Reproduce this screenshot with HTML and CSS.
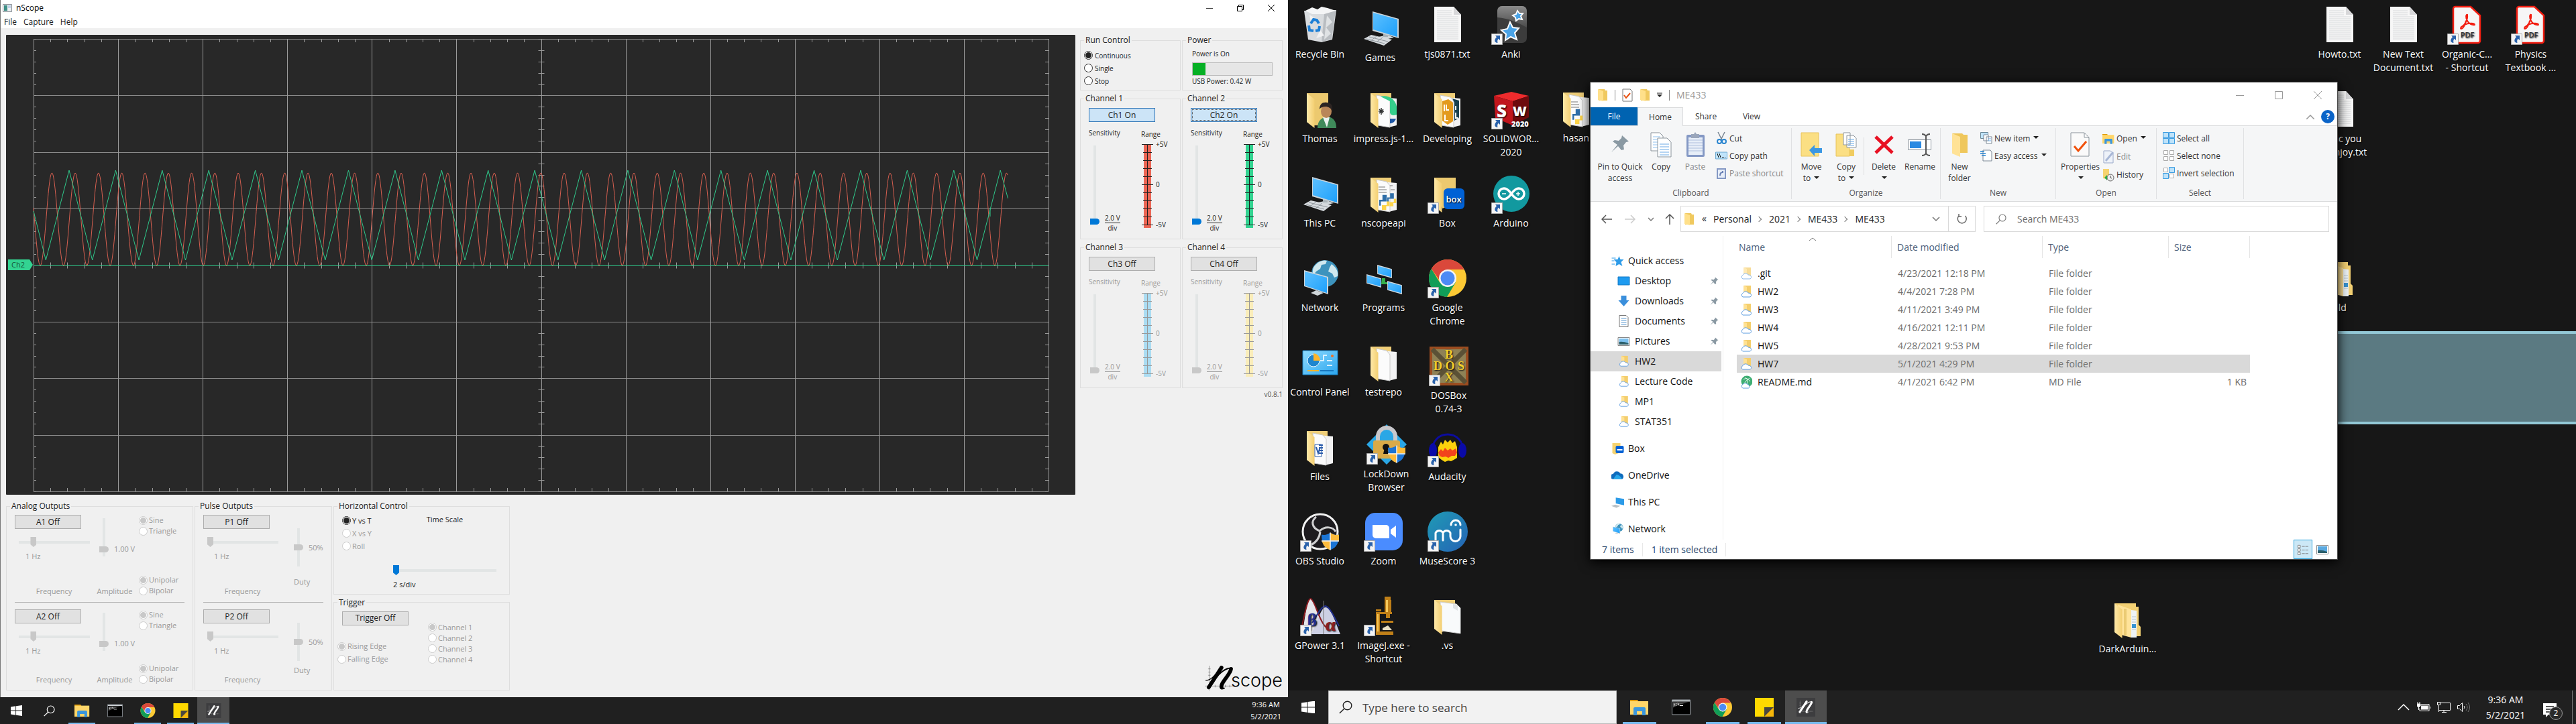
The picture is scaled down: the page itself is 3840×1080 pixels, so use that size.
FILE: index.html
```html
<!DOCTYPE html>
<html lang="en">
<head>
<meta charset="utf-8">
<title>nScope</title>
<link rel="stylesheet" href="styles.css">
</head>
<body>
<svg class="sprite" aria-hidden="true">
  <defs>
    <linearGradient id="g-sky" x1="0" y1="0" x2="1" y2="1"><stop offset="0" stop-color="#5cc0ff"/><stop offset="1" stop-color="#1ea0fb"/></linearGradient>
    <linearGradient id="g-fold" x1="0" y1="0" x2="1" y2="0"><stop offset="0" stop-color="#ffe9a8"/><stop offset="1" stop-color="#f3cf72"/></linearGradient>
    <linearGradient id="g-anki" x1="0" y1="0" x2="0" y2="1"><stop offset="0" stop-color="#8a8a8a"/><stop offset="1" stop-color="#4b4b4b"/></linearGradient>
    <linearGradient id="g-muse" x1="0" y1="0" x2="1" y2="1"><stop offset="0" stop-color="#1f9bb5"/><stop offset="1" stop-color="#2563b5"/></linearGradient>
    <linearGradient id="g-panel" x1="0" y1="0" x2="1" y2="1"><stop offset="0" stop-color="#8fdcff"/><stop offset="1" stop-color="#2ba5ee"/></linearGradient>
  </defs>
  <symbol id="s-arrow" viewBox="0 0 17 17"><path d="M.5.5h16v16H.5z" fill="#f4f4f4" stroke="#a8a8a8"/><path d="M6 3h7v7l-2.300-2.200C9 9.500 9 11.500 9.500 14 4.500 14 4 9 8 5.300z" fill="#2a62ab"/></symbol>
  <symbol id="s-file" viewBox="0 0 60 60"><path d="M10 3h29l11 12v41H10z" fill="#f7f7f7"/><path d="M39 3v12h11z" fill="#d7d7d9"/><path d="M14 9h22M14 12h22M14 15h22M14 18h32M14 21h32M14 24h32M14 27h32M14 30h32M14 33h32M14 36h32M14 39h32M14 42h32M14 45h32M14 48h32M14 51h32" stroke="#d6d8da"/></symbol>
  <symbol id="s-front" viewBox="0 0 60 60"><path d="M10 6l11.500 9v43L10 49z" fill="url(#g-fold)"/></symbol>
  <symbol id="s-pages" viewBox="0 0 60 60"><path d="M10 6h31v40l-20 8z" fill="#efce78"/><path d="M27 12l22 2v40l-12 3z" fill="#f2f2f3"/><path d="M19 9l15 3 5 6v39l-18-3z" fill="#fbfbfb" stroke="#c9c9c9"/><use href="#s-front"/></symbol>
  <symbol id="s-py" viewBox="0 0 20 30"><path d="M6 1h8v12H3v8H0V10h6z" fill="#2f6ea8"/><path d="M14 13h5v9h-6v7H5v-9h9z" fill="#fdd44a"/></symbol>
  <symbol id="s-pc" viewBox="0 0 60 60"><path d="M27 43l13-3 10 4-13 3z" fill="#cfd6da"/><path d="M34 36h7v7h-7z" fill="#aab3b8"/><path d="M18 5l39 11v29l-39-11z" fill="#c9d3da"/><path d="M19 7l36 10v26L19 32z" fill="url(#g-sky)"/><path d="M5 46l11-6 31 7-12 9z" fill="#d7dbdf"/><path d="M9 46l27 7M13 43l28 7M15 49l9-7M24 51l9-7" stroke="#8f979d" fill="none"/></symbol>
  <symbol id="s-mon" viewBox="0 0 24 22"><path d="M0 0l24 7v15L0 15z" fill="#d4dbe0"/><path d="M1 2l22 6v12L1 14z" fill="url(#g-sky)"/></symbol>
  <symbol id="s-net" viewBox="0 0 60 60"><circle cx="37" cy="23" r="20" fill="#3d93bd"/><path d="M20 14c6-9 14-12 20-10l-2 5-6 1-2 6-6 4-4 5c-2-4-1-8 0-11zM47 9c7 5 10 11 9 18l-5 2-3-6-6-3 2-6z" fill="#cfe8ee"/><path d="M16 52l8-4 11 4-9 4z" fill="#cfd6da"/><path d="M6 18l36 10v26L6 42z" fill="#cdd6dc"/><path d="M7 20l33 9v23L7 41z" fill="url(#g-sky)"/></symbol>
  <symbol id="s-chrome" viewBox="0 0 56 56"><circle cx="28" cy="28" r="28" fill="#fcc934"/><path d="M28 0A28 28 0 0 1 52.500 15H28L18 34 3.700 14A28 28 0 0 1 28 0z" fill="#da483b"/><path d="M3.700 14A28 28 0 0 0 27 56L40 34 28 41 16 34z" fill="#119d58"/><circle cx="28" cy="28" r="13" fill="#f4f4f4"/><circle cx="28" cy="28" r="10.500" fill="#4c8bf5"/></symbol>
  <symbol id="s-shield" viewBox="0 0 26 26"><path d="M13 0c4 3 8 4 13 3 0 12-3 19-13 23C3 22 0 15 0 3c5 1 9 0 13-3z" fill="#1b74d4"/><path d="M13 0c4 3 8 4 13 3v9H13zM13 12v14C5 23 2 18 .5 12z" fill="#fdbb3b"/><path d="M13 0v26M0 12.500h26" stroke="#f5f5f5" stroke-width="1.500"/></symbol>
  <symbol id="s-pdf" viewBox="0 0 60 60"><path d="M12 3h23l14 13v38a3 3 0 0 1-3 3H12a3 3 0 0 1-3-3V6a3 3 0 0 1 3-3z" fill="#f6f6f6" stroke="#f21d10" stroke-width="2.500"/><path d="M20 34c6-3 11-11 10-19-2-1-3 4 0 9 2 4 7 7 11 6 1-3-10-3-15 0-6 3-7 6-5 6 3 0 6-7 7-12" fill="none" stroke="#f21d10" stroke-width="2"/></symbol>
  <symbol id="s-dark" viewBox="0 0 60 60"><path d="M10 6h32v5h4v27l3 3v14H30z" fill="#f3d073"/><path d="M35 16l8 1v40h-9z" fill="#eef3f6"/><path d="M36 26h6M36 30h6M36 34h6M36 45h6" stroke="#b8c6d0"/><path d="M36 37h6v6h-6z" fill="#3a94d2"/><path d="M15 8l20 7v42l-15-4z" fill="#ffe39a"/><path d="M28 14v40l-4-1V14z" fill="#ebcb74"/><use href="#s-front"/></symbol>
  <symbol id="s-win" viewBox="0 0 20 18"><path d="M0 2.500L8.500 1.200v7.300H0zM9.500 1L20-.4v8.900H9.500zM0 9.500h8.500v7.300L0 15.500zM9.500 9.500H20v8.900L9.500 17z" fill="#fff"/></symbol>
  <symbol id="s-lens" viewBox="0 0 20 20"><circle cx="12.500" cy="7.500" r="6.300" fill="none" stroke="currentColor" stroke-width="1.400"/><path d="M8 12L.8 19" stroke="currentColor" stroke-width="1.500"/></symbol>
  <symbol id="s-explorer" viewBox="0 0 28 24"><path d="M0 1h11l2 3H0z" fill="#e09a06"/><path d="M0 3h27v20H0z" fill="#ffd669"/><path d="M5 14q0-2 2-2h14q2 0 2 2v10h-5v-6h-8v6H5z" fill="#3a96dd"/></symbol>
  <symbol id="s-cmd" viewBox="0 0 28 23"><path d="M.5.500h27v22H.5z" fill="#000" stroke="#9aa0a6"/><path d="M1 1h26v2H1z" fill="#cfd4d8"/><path d="M2 12q8-5 23-8H2z" fill="#555"/><path d="M4 6v3M6 6h1M6 9h1M9 5l2 4M12 9h5" stroke="#eee"/></symbol>
  <symbol id="s-sticky" viewBox="0 0 26 26"><path d="M0 0h26v13L13 26H0z" fill="#ffd900"/><path d="M13 26V13h13z" fill="#4a4740"/><path d="M26 13v13H13z" fill="#f5b60a"/></symbol>
  <symbol id="s-nmark" viewBox="0 0 46 40"><path d="M7 0v39M0 32h46M5 5h4M5 10h4M5 15h4M16 30v4M24 30v4M32 30v4M39 30v4" stroke="currentColor" opacity=".35" fill="none"/><path d="M1 23C10 24 18 12 26 3" stroke="currentColor" stroke-width="1.500" fill="none"/><path d="M26 3L6 34" stroke="currentColor" stroke-width="6" stroke-linecap="round"/><path d="M15 22C24 10 34 3 41 4" stroke="currentColor" stroke-width="2" fill="none"/><path d="M41 5C40 14 24 27 26 34" stroke="currentColor" stroke-width="6" fill="none" stroke-linecap="round"/><path d="M25 36q3 1 6-1" stroke="currentColor" stroke-width="2" fill="none"/></symbol>
  <symbol id="s-ntile" viewBox="0 0 30 30"><path d="M0 0h30v30H0z" fill="#3d3d3f"/><svg x="2" y="4" width="25" height="22"><use href="#s-nmark"/></svg></symbol>
  <symbol id="s-fold" viewBox="0 0 16 20"><path d="M2 1h9l1 2h3v15H2z" fill="#f0c95f"/><path d="M1 1l8 3v15L1 17z" fill="#ffe08a"/></symbol>
  <symbol id="s-cfold" viewBox="0 0 18 20"><path d="M5 1h11v16H5z" fill="#f4ce6d"/><path d="M5 1l5 2v14H5z" fill="#ffe193"/><path d="M4 18a3 3 0 0 1 0-5.500 4.500 4.500 0 0 1 8-.5c3 0 4.500 1.500 4.500 3.500 0 1.500-1 2.500-2.500 2.500z" fill="#fff" stroke="#5b9be0"/></symbol>
  <symbol id="s-pin" viewBox="0 0 28 28"><path d="M17 1l10 9-4 1-4 5 1 6-4 1-5-6-10 9 9-11-7-5 3-2 6 1 4-4z" fill="#8a99a3"/></symbol>
  <symbol id="s-gauge" viewBox="0 0 20 138"><path d="M4 7h11v125H4z" fill="currentColor"/><path d="M9.500 7v121M1 7.500h17M1 67.500h17M1 127.500h17M3 19.500h13M3 31.500h13M3 43.500h13M3 55.500h13M3 79.500h13M3 91.500h13M3 103.500h13M3 115.500h13" fill="none"/></symbol>
  <symbol id="s-pcsmall" viewBox="0 0 20 18"><path d="M7 2l13 2v10L7 11z" fill="#2c9be8"/><path d="M0 15l6-2 8 2-6 3z" fill="#b9c0c5"/></symbol>
</svg>

<div class="screens">
<section class="screen">
  <main class="scope-window">
    <header class="titlebar">
      <svg class="app-icon" viewBox="0 0 14 12"><path d="M.5.5h13v11H.5z" fill="#eef1f4" stroke="#8a9096"/><path d="M2 2h5v8H2z" fill="#3f8f86"/><path d="M8 2h4v4H8z" fill="#c3d3ea"/></svg>
      <span class="title">nScope</span>
      <button class="wbtn" aria-label="Minimize"><svg viewBox="0 0 12 12" width="10" height="10"><path d="M0 6.500h12" stroke="#000"/></svg></button>
      <button class="wbtn" aria-label="Restore"><svg viewBox="0 0 10 10" width="10" height="10"><path d="M.5 2.500h7v7h-7zM2.500 2.500v-2h7v7h-2" fill="none" stroke="#000"/></svg></button>
      <button class="wbtn" aria-label="Close"><svg viewBox="0 0 10 10" width="10" height="10"><path d="M0 0l10 10M10 0L0 10" stroke="#000"/></svg></button>
    </header>
    <nav class="menubar"><button>File</button><button>Capture</button><button>Help</button></nav>
    <div class="scope-body">
      <div class="scope-left">
        <svg id="plot" class="plot" viewBox="0 0 1594 686" role="img" aria-label="Oscilloscope traces"></svg>
        <div class="outputs">
          <fieldset class="group">
            <legend>Analog Outputs</legend>
            <div class="output muted">
              <div class="o-freq"><button class="btn">A1 Off</button><input type="range" class="hs" value="18" aria-label="A1 frequency" disabled><span class="hz">1 Hz</span><span class="cap">Frequency</span></div>
              <div class="o-amp"><div class="amp-row"><input type="range" class="vs" value="12" aria-label="A1 amplitude" disabled><span>1.00 V</span></div><span class="cap">Amplitude</span></div>
              <div class="o-mode"><div class="radios"><label><input type="radio" name="a1w" checked disabled>Sine</label><label><input type="radio" name="a1w" disabled>Triangle</label></div><div class="radios"><label><input type="radio" name="a1p" checked disabled>Unipolar</label><label><input type="radio" name="a1p" disabled>Bipolar</label></div></div>
            </div>
            <hr>
            <div class="output muted">
              <div class="o-freq"><button class="btn">A2 Off</button><input type="range" class="hs" value="18" aria-label="A2 frequency" disabled><span class="hz">1 Hz</span><span class="cap">Frequency</span></div>
              <div class="o-amp"><div class="amp-row"><input type="range" class="vs" value="12" aria-label="A2 amplitude" disabled><span>1.00 V</span></div><span class="cap">Amplitude</span></div>
              <div class="o-mode"><div class="radios"><label><input type="radio" name="a2w" checked disabled>Sine</label><label><input type="radio" name="a2w" disabled>Triangle</label></div><div class="radios"><label><input type="radio" name="a2p" checked disabled>Unipolar</label><label><input type="radio" name="a2p" disabled>Bipolar</label></div></div>
            </div>
          </fieldset>
          <fieldset class="group">
            <legend>Pulse Outputs</legend>
            <div class="output muted">
              <div class="o-freq"><button class="btn">P1 Off</button><input type="range" class="hs" value="0" aria-label="P1 frequency" disabled><span class="hz">1 Hz</span><span class="cap">Frequency</span></div>
              <div class="o-duty"><div class="duty-row"><input type="range" class="vs" value="50" aria-label="P1 duty" disabled><span>50%</span></div><span>Duty</span></div>
            </div>
            <hr>
            <div class="output muted">
              <div class="o-freq"><button class="btn">P2 Off</button><input type="range" class="hs" value="0" aria-label="P2 frequency" disabled><span class="hz">1 Hz</span><span class="cap">Frequency</span></div>
              <div class="o-duty"><div class="duty-row"><input type="range" class="vs" value="50" aria-label="P2 duty" disabled><span>50%</span></div><span>Duty</span></div>
            </div>
          </fieldset>
          <div class="stack">
            <fieldset class="group">
              <legend>Horizontal Control</legend>
              <div class="horiz">
                <div class="radios wide"><label><input type="radio" name="hz" checked>Y vs T</label><label class="muted"><input type="radio" name="hz" disabled>X vs Y</label><label class="muted"><input type="radio" name="hz" disabled>Roll</label></div>
                <div class="time"><label for="timescale">Time Scale</label><input id="timescale" type="range" class="hs" value="0"><span>2 s/div</span></div>
              </div>
            </fieldset>
            <fieldset class="group">
              <legend>Trigger</legend>
              <div class="trigger">
                <div class="trig-left"><button class="btn">Trigger Off</button><div class="radios wide muted"><label><input type="radio" name="edge" checked disabled>Rising Edge</label><label><input type="radio" name="edge" disabled>Falling Edge</label></div></div>
                <div class="radios trig-ch muted"><label><input type="radio" name="tch" checked disabled>Channel 1</label><label><input type="radio" name="tch" disabled>Channel 2</label><label><input type="radio" name="tch" disabled>Channel 3</label><label><input type="radio" name="tch" disabled>Channel 4</label></div>
              </div>
            </fieldset>
          </div>
        </div>
      </div>
      <aside class="scope-side">
        <div class="side-grid">
          <fieldset class="group run">
            <legend>Run Control</legend>
            <div class="radios wide"><label><input type="radio" name="run" checked>Continuous</label><label><input type="radio" name="run">Single</label><label><input type="radio" name="run">Stop</label></div>
          </fieldset>
          <fieldset class="group power">
            <legend>Power</legend>
            <div class="power-body"><span>Power is On</span><progress value="16" max="100" aria-label="USB power"></progress><span>USB Power: 0.42 W</span></div>
          </fieldset>
          <fieldset class="group channel ch1">
            <legend>Channel 1</legend>
            <button class="btn on">Ch1 On</button>
            <div class="ch-body">
              <div class="sens"><label for="s1">Sensitivity</label><div class="sens-row"><input id="s1" type="range" class="vs" value="0"><span class="frac"><span>2.0 V</span><span>div</span></span></div></div>
              <div class="range"><span>Range</span><div class="gauge"><svg viewBox="0 0 20 138"><use href="#s-gauge" width="20" height="138"/></svg><div class="ticks"><span>+5V</span><span>0</span><span>-5V</span></div></div></div>
            </div>
          </fieldset>
          <fieldset class="group channel ch2">
            <legend>Channel 2</legend>
            <button class="btn on focused">Ch2 On</button>
            <div class="ch-body">
              <div class="sens"><label for="s2">Sensitivity</label><div class="sens-row"><input id="s2" type="range" class="vs" value="0"><span class="frac"><span>2.0 V</span><span>div</span></span></div></div>
              <div class="range"><span>Range</span><div class="gauge"><svg viewBox="0 0 20 138"><use href="#s-gauge" width="20" height="138"/></svg><div class="ticks"><span>+5V</span><span>0</span><span>-5V</span></div></div></div>
            </div>
          </fieldset>
          <fieldset class="group channel ch3">
            <legend>Channel 3</legend>
            <button class="btn">Ch3 Off</button>
            <div class="ch-body muted">
              <div class="sens"><label for="s3">Sensitivity</label><div class="sens-row"><input id="s3" type="range" class="vs" value="0" disabled><span class="frac"><span>2.0 V</span><span>div</span></span></div></div>
              <div class="range"><span>Range</span><div class="gauge"><svg viewBox="0 0 20 138"><use href="#s-gauge" width="20" height="138"/></svg><div class="ticks"><span>+5V</span><span>0</span><span>-5V</span></div></div></div>
            </div>
          </fieldset>
          <fieldset class="group channel ch4">
            <legend>Channel 4</legend>
            <button class="btn">Ch4 Off</button>
            <div class="ch-body muted">
              <div class="sens"><label for="s4">Sensitivity</label><div class="sens-row"><input id="s4" type="range" class="vs" value="0" disabled><span class="frac"><span>2.0 V</span><span>div</span></span></div></div>
              <div class="range"><span>Range</span><div class="gauge"><svg viewBox="0 0 20 138"><use href="#s-gauge" width="20" height="138"/></svg><div class="ticks"><span>+5V</span><span>0</span><span>-5V</span></div></div></div>
            </div>
          </fieldset>
        </div>
        <span class="version">v0.8.1</span>
        <div class="logo"><svg viewBox="0 0 46 40"><use href="#s-nmark"/></svg><span>scope</span></div>
      </aside>
    </div>
  </main>
  <footer class="taskbar small">
    <button class="task" aria-label="Start"><svg class="i-win"><use href="#s-win"/></svg></button>
    <button class="task" aria-label="Search"><svg class="i-lens"><use href="#s-lens"/></svg></button>
    <button class="task open" aria-label="File Explorer"><svg class="i-app"><use href="#s-explorer"/></svg></button>
    <button class="task" aria-label="Command Prompt"><svg class="i-app"><use href="#s-cmd"/></svg></button>
    <button class="task open" aria-label="Chrome"><svg class="i-app"><use href="#s-chrome"/></svg></button>
    <button class="task open" aria-label="Sticky Notes"><svg class="i-app"><use href="#s-sticky"/></svg></button>
    <button class="task active" aria-label="nScope"><svg class="i-app"><use href="#s-ntile"/></svg></button>
    <div class="clock"><span>9:36 AM</span><span>5/2/2021</span></div>
  </footer>
</section>

<section class="screen">
  <div class="desktop">
    <div class="band"></div>
    <a href="#" class="icon c1 r1"><svg viewBox="0 0 60 60"><path d="M6 9l48-1-6 44-16 4-20-4z" fill="#d9dcdf"/><path d="M8 9l10-5 8 3 6-4 9 2 12 4-9 5H18z" fill="#f4f5f6"/><path d="M36 14l17-5-6 42-15 5z" fill="#b9bdc1"/><path d="M40 16l8 10-9 8 7 9-10 9" fill="#dfe2e4"/><path d="M14 15l8 5-6 6zM30 38l6 8-12 4z" fill="#f1f2f3"/><path d="M16 28l4-6 5 1 3 5M13 31l1 7 6 1M23 39l5-1 1-6" fill="none" stroke="#1c7fd6" stroke-width="4"/></svg><span>Recycle Bin</span></a>
    <a href="#" class="icon games"><svg><use href="#s-pc"/></svg><span>Games</span></a>
    <a href="#" class="icon c3 r1"><svg><use href="#s-file"/></svg><span>tjs0871.txt</span></a>
    <a href="#" class="icon c4 r1"><svg viewBox="0 0 60 60"><rect x="9" y="2" width="44" height="55" rx="7" fill="#3c3c3c"/><path d="M16 2h30a7 7 0 0 1 7 7v25C42 28 26 20 9 19V9a7 7 0 0 1 7-7z" fill="url(#g-anki)"/><path d="M28 26l4 8 9 1-6 7 3 10-9-4-8 5 1-9-7-6 9-2zM39 9l3 4 5 0-3 4 2 5-5-1-4 3-1-5-4-3 5-2z" fill="#4aa3e6" stroke="#fff" stroke-width="2"/><use href="#s-arrow" y="43" width="17" height="17"/></svg><span>Anki</span></a>

    <a href="#" class="icon c1 r2"><svg viewBox="0 0 60 60"><path d="M10 6h32v48H21z" fill="#ecc96f"/><use href="#s-front"/><path d="M26 58c0-10 5-16 15-17 9 1 13 7 13 17z" fill="#3f8a5a"/><path d="M34 42h10l-4 15z" fill="#e9f1ee"/><ellipse cx="39" cy="33" rx="8" ry="10" fill="#b98658"/><path d="M29 30c0-8 5-11 11-10 7 0 9 5 8 13-2-5-6-7-10-7-4 0-7 1-9 4z" fill="#2b2422"/></svg><span>Thomas</span></a>
    <a href="#" class="icon c2 r2"><svg viewBox="0 0 60 60"><use href="#s-pages"/><path d="M25 11c12-3 22 4 24 15v12c-5 2-9 1-10-3V18z" fill="#35cf8c"/><path d="M39 44h9c-2 5-5 7-9 7z" fill="#1e57a5"/><path d="M26 28v10M23 30l6 6M29 30l-6 6M22 33h8" stroke="#333" stroke-width="1.500"/></svg><span>impress.js-1...</span></a>
    <a href="#" class="icon c3 r2"><svg viewBox="0 0 60 60"><use href="#s-pages"/><path d="M22 18l9-3 7 5v28l-8 5-8-6z" fill="#e39a1d"/><path d="M37 14l10 3v26l-7 4V20z" fill="#17404f"/><path d="M25 23v10M28 23v8h4M26 38v9h5M42 25v6M42 35v8h4" stroke="#fff" stroke-width="2" fill="none"/></svg><span>Developing</span></a>
    <a href="#" class="icon c4 r2"><svg viewBox="0 0 60 60"><path d="M4 10l26-6 26 6-24 8z" fill="#ef2b2d"/><path d="M4 10l28 8v36L6 43z" fill="#c1161c"/><path d="M56 10l-24 8v36l24-12z" fill="#6d0a0d"/><text x="8" y="42" class="sw-text">S</text><text x="32" y="40" class="sw-text sw-w">W</text><text x="30" y="56" class="sw-year">2020</text><use href="#s-arrow" y="43" width="17" height="17"/></svg><span>SOLIDWOR... 2020</span></a>
    <a href="#" class="icon hasan"><svg viewBox="0 0 60 60"><use href="#s-pages"/><path d="M22 20h10M22 24h12M22 28h12" stroke="#777"/><use href="#s-py" x="24" y="29" width="16" height="26"/></svg><span>hasan</span></a>

    <a href="#" class="icon c1 r3"><svg><use href="#s-pc"/></svg><span>This PC</span></a>
    <a href="#" class="icon c2 r3"><svg viewBox="0 0 60 60"><use href="#s-pages"/><path d="M22 20h10M22 24h12M22 28h12M39 18h4M40 24h6" stroke="#777"/><use href="#s-py" x="35" y="26" width="14" height="26"/><use href="#s-py" x="23" y="30" width="16" height="26"/></svg><span>nscopeapi</span></a>
    <a href="#" class="icon c3 r3"><svg viewBox="0 0 60 60"><path d="M10 6h32v38l-20 8z" fill="#ecc96f"/><use href="#s-front"/><rect x="24" y="22" width="31" height="31" rx="6" fill="#0061d5"/><text x="39" y="43" class="box-text">box</text><use href="#s-arrow" y="43" width="17" height="17"/></svg><span>Box</span></a>
    <a href="#" class="icon c4 r3"><svg viewBox="0 0 60 60"><circle cx="30" cy="30" r="27" fill="#12999f"/><path d="M30 30c-5-7-8-8-11-8a8 8 0 0 0 0 16c3 0 6-1 11-8 5-7 8-8 11-8a8 8 0 0 1 0 16c-3 0-6-1-11-8z" fill="none" stroke="#fff" stroke-width="3.500"/><path d="M16 30h6M37 30h6M40 27v6" stroke="#fff" stroke-width="1.500"/><use href="#s-arrow" y="43" width="17" height="17"/></svg><span>Arduino</span></a>

    <a href="#" class="icon c1 r4"><svg><use href="#s-net"/></svg><span>Network</span></a>
    <a href="#" class="icon c2 r4"><svg viewBox="0 0 60 60"><path d="M27 30h5v6h8v3H26z" fill="#35b04a"/><use href="#s-mon" x="20" y="10" width="22" height="20"/><use href="#s-mon" x="4" y="24" width="22" height="20"/><use href="#s-mon" x="35" y="34" width="22" height="20"/></svg><span>Programs</span></a>
    <a href="#" class="icon c3 r4"><svg viewBox="0 0 60 60"><use href="#s-chrome" x="2" y="2" width="56" height="56"/><use href="#s-arrow" y="43" width="17" height="17"/></svg><span>Google Chrome</span></a>

    <a href="#" class="icon c1 r5"><svg viewBox="0 0 60 60"><path d="M4 12h52v36H4z" fill="url(#g-panel)" stroke="#187fc0"/><circle cx="20" cy="27" r="9" fill="#1f86cf" stroke="#e8f6ff"/><path d="M20 16a11 11 0 0 1 10 11H20z" fill="#fdb62c"/><path d="M30 27h5v-8h5M40 27h8M40 34h8" stroke="#d9f1ff" stroke-width="2" fill="none"/><circle cx="48" cy="20" r="2" fill="#f36f21"/><path d="M11 42h17" stroke="#fdb62c" stroke-width="2"/><path d="M30 42h20" stroke="#1878c0" stroke-width="2"/></svg><span>Control Panel</span></a>
    <a href="#" class="icon c2 r5"><svg><use href="#s-pages"/></svg><span>testrepo</span></a>
    <a href="#" class="icon dosbox"><svg viewBox="0 0 60 60"><path d="M1 1h58v58H1z" fill="#9c4d20"/><path d="M5 5h50v50H5z" fill="#8f8256"/><path d="M5 5l50 50M55 5L5 55" stroke="#5b5136" stroke-width="7"/><text x="30" y="19" class="dos-text">B</text><text x="30" y="36" class="dos-text">D O S</text><text x="30" y="53" class="dos-text">X</text><use href="#s-arrow" y="43" width="17" height="17"/></svg><span>DOSBox<br>0.74-3</span></a>

    <a href="#" class="icon c1 r6"><svg viewBox="0 0 60 60"><use href="#s-pages"/><path d="M22 26h10v18H22z" fill="#fff" stroke="#2b5cab"/><path d="M24 30l3 9 3-9M28 27h6M28 31h6M28 35h6M28 39h6" stroke="#2b5cab" stroke-width="2" fill="none"/></svg><span>Files</span></a>
    <a href="#" class="icon lockdown"><svg viewBox="0 0 60 60"><path d="M30 0l30 30-30 30L0 30z" fill="#2aa7e6"/><path d="M17 25V18a13 13 0 0 1 26 0v7" fill="none" stroke="#c8c8cc" stroke-width="6"/><rect x="10" y="24" width="40" height="27" rx="3" fill="#d9aa48"/><circle cx="29" cy="34" r="5" fill="#111"/><path d="M27 35h4l2 9h-8z" fill="#111"/><use href="#s-shield" x="32" y="31" width="26" height="27"/><use href="#s-arrow" y="43" width="17" height="17"/></svg><span>LockDown Browser</span></a>
    <a href="#" class="icon c3 r6"><svg viewBox="0 0 60 60"><path d="M7 38C5 2 55 2 53 38" fill="none" stroke="#0c0c9e" stroke-width="3"/><path d="M16 30l4-8 3 4 3-7 4 4 4-4 3 5 4-3 3 9v16l-5 3-4 2-4-1-5 2-5-3-5-4z" fill="#fcd20c"/><path d="M16 38l4-5 3 3 3-5 4 4 4-3 3 3 5-3 2 6-3 5-5 0-5 3-4-2-5 1-4-2z" fill="#f2431c"/><ellipse cx="8" cy="35" rx="6" ry="11" fill="#0a0aa8"/><ellipse cx="52" cy="35" rx="6" ry="11" fill="#0a0aa8"/><use href="#s-arrow" y="43" width="17" height="17"/></svg><span>Audacity</span></a>

    <a href="#" class="icon c1 r7"><svg viewBox="0 0 60 60"><circle cx="30" cy="30" r="26" fill="#1d1b1f" stroke="#f2f2f2" stroke-width="3"/><path d="M24 8c-8 6-7 16 5 21 9-8 20-6 24 1M30 30c-1 10-6 16-14 20" fill="none" stroke="#cfcfd1" stroke-width="3"/><use href="#s-shield" x="32" y="31" width="26" height="27"/><use href="#s-arrow" y="43" width="17" height="17"/></svg><span>OBS Studio</span></a>
    <a href="#" class="icon c2 r7"><svg viewBox="0 0 60 60"><rect x="2" y="2" width="56" height="56" rx="15" fill="#4a8cff"/><path d="M13 20h20a5 5 0 0 1 5 5v15H18a5 5 0 0 1-5-5zM40 27l8-6v18l-8-6z" fill="#fff"/><use href="#s-arrow" y="43" width="17" height="17"/></svg><span>Zoom</span></a>
    <a href="#" class="icon c3 r7"><svg viewBox="0 0 60 60"><circle cx="30" cy="30" r="30" fill="url(#g-muse)"/><path d="M12 44V32a6 6 0 0 1 11 0v11M23 43V32a6 6 0 0 1 11 0v5a7 7 0 0 0 15 0V27M35 20a7 7 0 0 1 14 0" fill="none" stroke="#fff" stroke-width="3" stroke-linecap="round"/><circle cx="42" cy="20" r="1.800" fill="#fff"/><use href="#s-arrow" y="43" width="17" height="17"/></svg><span>MuseScore 3</span></a>

    <a href="#" class="icon c1 r8"><svg viewBox="0 0 60 60"><path d="M4 57C8 20 12 3 16 4c7 4 14 40 25 53z" fill="#e6e6ea"/><path d="M16 57c8-10 14-40 22-40s14 20 22 40z" fill="#cdd0e4"/><path d="M3 45C8 20 12 3 16 4c7 4 12 34 23 43" fill="none" stroke="#8a1d22" stroke-width="2"/><path d="M18 40c6-8 12-24 20-25 6 2 11 12 20 30" fill="none" stroke="#22308f" stroke-width="2"/><path d="M35 7v50" stroke="#777"/><text x="18" y="45" class="gp-text gp-b">β</text><text x="45" y="52" class="gp-text gp-a">α</text><use href="#s-arrow" y="43" width="17" height="17"/></svg><span>GPower 3.1</span></a>
    <a href="#" class="icon c2 r8"><svg viewBox="0 0 60 60"><path d="M31 1h9v5h1v19h-2v8h-6v-8h-2zM18 24h24v3H24v26h20v5H18zM26 37h18v3H26zM18 20h8v3h-8z" fill="#c08018"/><path d="M33 6h3v18h-3zM20 27h2v26h-2z" fill="#f6c85a"/><path d="M28 48l8-4 6 7H28z" fill="#e9dfc4"/><use href="#s-arrow" y="43" width="17" height="17"/></svg><span>ImageJ.exe - Shortcut</span></a>
    <a href="#" class="icon c3 r8"><svg viewBox="0 0 60 60"><path d="M10 6h31v40l-20 8z" fill="#efce78"/><path d="M19 9l24 3 6 6v38l-28-4z" fill="#f8fafb" stroke="#cfcfcf"/><path d="M38 12v6l7 4V13z" fill="#dfe2e4"/><use href="#s-front"/></svg><span>.vs</span></a>

    <a href="#" class="icon d1 r1"><svg><use href="#s-file"/></svg><span>Howto.txt</span></a>
    <a href="#" class="icon d2 r1"><svg><use href="#s-file"/></svg><span>New Text Document.txt</span></a>
    <a href="#" class="icon d3 r1"><svg viewBox="0 0 60 60"><use href="#s-pdf"/><text x="30" y="49" class="pdf-text">PDF</text><use href="#s-arrow" y="43" width="17" height="17"/></svg><span>Organic-C...<br>- Shortcut</span></a>
    <a href="#" class="icon d4 r1"><svg viewBox="0 0 60 60"><use href="#s-pdf"/><text x="30" y="49" class="pdf-text">PDF</text><use href="#s-arrow" y="43" width="17" height="17"/></svg><span>Physics Textbook&nbsp;...</span></a>
    <a href="#" class="icon d1 r2"><svg><use href="#s-file"/></svg><span>Music you will&nbsp;enjoy.txt</span></a>
    <a href="#" class="icon d1 r4"><svg><use href="#s-dark"/></svg><span>old</span></a>
    <a href="#" class="icon arduino-dark"><svg><use href="#s-dark"/></svg><span>DarkArduin...</span></a>

    <article class="explorer">
      <header class="ex-title">
        <svg class="i-fold"><use href="#s-fold"/></svg><i></i>
        <svg class="i-check" viewBox="0 0 16 20"><path d="M1 1h11l3 3v15H1z" fill="#fff" stroke="#777"/><path d="M3 10l3 4 6-7" fill="none" stroke="#e8500f" stroke-width="2"/></svg>
        <svg class="i-fold"><use href="#s-fold"/></svg>
        <svg class="i-drop" viewBox="0 0 8 8"><path d="M0 1h8" stroke="#222"/><path d="M0 3h8L4 7z" fill="#222"/></svg><i></i>
        <span class="ex-name">ME433</span>
        <button class="wbtn" aria-label="Minimize"><svg viewBox="0 0 12 12" width="12" height="12"><path d="M0 6.500h12" stroke="#999"/></svg></button>
        <button class="wbtn" aria-label="Maximize"><svg viewBox="0 0 12 12" width="12" height="12"><path d="M.5.500h11v11H.5z" fill="none" stroke="#999"/></svg></button>
        <button class="wbtn" aria-label="Close"><svg viewBox="0 0 12 12" width="12" height="12"><path d="M0 0l12 12M12 0L0 12" stroke="#999"/></svg></button>
      </header>
      <div class="tabs">
        <button class="tab file">File</button><button class="tab current">Home</button><button class="tab">Share</button><button class="tab">View</button>
        <svg class="i-up" viewBox="0 0 12 7"><path d="M0 7l6-6 6 6" fill="none" stroke="#999" stroke-width="1.500"/></svg>
        <button class="help" aria-label="Help">?</button>
      </div>
      <div class="ribbon">
        <section class="rg g-clip">
          <div class="rg-items">
            <button class="big w-pin"><svg><use href="#s-pin" x="2" y="3" width="28" height="30"/></svg><span>Pin to Quick access</span></button>
            <button class="big w-copy"><svg viewBox="0 0 32 38"><path d="M1 1h13l5 5v22H1z" fill="#fff" stroke="#8a939b"/><path d="M4 7h11M4 11h12M4 15h12M4 19h12M4 23h12" stroke="#8ec0ee"/><path d="M11 9h14l6 6v22H11z" fill="#fff" stroke="#8a939b"/><path d="M14 18h14M14 22h14M14 26h14M14 30h14M14 34h14" stroke="#6aa9e6"/></svg><span>Copy</span></button>
            <button class="big w-paste muted"><svg viewBox="0 0 32 38"><rect x="3" y="4" width="27" height="33" rx="2" fill="#8498c4"/><path d="M6 8h21v26H6z" fill="#e7eef8"/><path d="M6 12h21M6 16h21M6 20h21M6 24h21M6 28h21" stroke="#aebfdd"/><path d="M10 3h4l2-3 2 3h4v6H10z" fill="#9aa6bb"/></svg><span>Paste</span></button>
            <div class="rows">
              <button><svg viewBox="0 0 18 20"><path d="M4 1l6 12M14 1L8 13" stroke="#7a8794" stroke-width="1.500"/><circle cx="6" cy="15" r="3" fill="none" stroke="#2784cf" stroke-width="2"/><circle cx="13" cy="15" r="3" fill="none" stroke="#2784cf" stroke-width="2"/></svg>Cut</button>
              <button><svg viewBox="0 0 18 20"><path d="M.5 5h17v10H.5z" fill="#bfe3fa" stroke="#6aa7cf"/><path d="M3 7l2 6M6 7l2 6M10 12.500h1M12 12.500h1M14 12.500h1" stroke="#111"/></svg>Copy path</button>
              <button class="muted"><svg viewBox="0 0 18 20"><rect x="2" y="3" width="14" height="16" fill="#8498c4"/><path d="M4 5h10v12H4z" fill="#e7eef8"/><path d="M7 14c0-4 2-5 4-5V7" fill="none" stroke="#6b82b5" stroke-width="2"/></svg>Paste shortcut</button>
            </div>
          </div>
          <h6>Clipboard</h6>
        </section>
        <section class="rg g-org">
          <div class="rg-items">
            <button class="big w-to"><svg viewBox="0 0 32 38"><path d="M1 1h26v35H1z" fill="#fbdf83" stroke="#e8c35c"/><path d="M13 27l8-8v5h11v7H21v5z" fill="#3b97e3"/></svg><span>Move<br>to <b class="dd"></b></span></button>
            <button class="big w-to"><svg viewBox="0 0 32 38"><path d="M1 3h20v33H1z" fill="#fbdf83" stroke="#e8c35c"/><path d="M21 26h7v10h-7z" fill="#f0cc60"/><path d="M12 1h10v18H12zM17 5h10l4 4v14H17z" fill="#fff" stroke="#8a939b"/><path d="M19 11h9M19 14h9M19 17h9M19 20h9" stroke="#6aa9e6"/></svg><span>Copy<br>to <b class="dd"></b></span></button>
            <i></i>
            <button class="big w-del"><svg viewBox="0 0 32 38"><path d="M4 7l25 24M29 7L4 31" stroke="#e81123" stroke-width="5"/></svg><span>Delete<br><b class="dd"></b></span></button>
            <button class="big w-ren"><svg class="wide-svg" viewBox="0 0 38 38"><path d="M1.500 11.500h34v15h-34z" fill="#fff" stroke="#8a939b"/><path d="M4 14h17v10H4z" fill="#2b8ae2"/><path d="M22 3q4 0 6 3 2-3 6-3M28 6v27M22 35q4 0 6-3 2 3 6 3" fill="none" stroke="#555" stroke-width="2"/></svg><span>Rename</span></button>
          </div>
          <h6>Organize</h6>
        </section>
        <section class="rg g-new">
          <div class="rg-items">
            <button class="big w-new"><svg viewBox="0 0 32 38"><path d="M5 2h15l2 2h6v27h-14z" fill="#efc75c"/><path d="M5 2l12 5v30L5 32z" fill="#ffe296"/></svg><span>New<br>folder</span></button>
            <div class="rows"><button><svg viewBox="0 0 18 20"><path d="M.5 1.500h11v9H.5z" fill="#bfe3fa" stroke="#6a8797"/><path d="M5 5h7v9H5zM9 8h8v10H9z" fill="#fff" stroke="#7a8794"/><path d="M11 11h5M11 14h5" stroke="#6aa9e6"/></svg>New item <b class="dd"></b></button><button><svg viewBox="0 0 18 20"><path d="M4 2h11l2 3v13H4z" fill="#fff" stroke="#7a8794"/><path d="M0 7h8M2 10h6M0 4h6" stroke="#2784cf" stroke-width="1.500"/></svg>Easy access <b class="dd"></b></button></div>
          </div>
          <h6>New</h6>
        </section>
        <section class="rg g-open">
          <div class="rg-items">
            <button class="big w-prop"><svg viewBox="0 0 32 38"><path d="M2 1h20l7 7v28H2z" fill="#fafafa" stroke="#8a939b"/><path d="M22 1v7h7" fill="none" stroke="#8a939b"/><path d="M7 21l6 7 12-14" fill="none" stroke="#f0510c" stroke-width="3"/></svg><span>Properties<br><b class="dd"></b></span></button>
            <div class="rows loose"><button><svg><use href="#s-explorer" width="18" height="20"/></svg>Open <b class="dd"></b></button><button class="muted"><svg viewBox="0 0 18 20"><path d="M2 1h10l4 4v14H2z" fill="#eef2f9" stroke="#9aa9c9"/><path d="M5 16L16 3" stroke="#a9b8d6" stroke-width="3"/></svg>Edit</button><button><svg viewBox="0 0 18 20"><path d="M1 1h9v16L1 15z" fill="#f6d36f"/><circle cx="12" cy="14" r="5" fill="#eee" stroke="#666"/><path d="M12 11v3l2 1" stroke="#444" fill="none"/><path d="M3 14l4-4v8z" fill="#2da84a"/></svg>History</button></div>
          </div>
          <h6>Open</h6>
        </section>
        <section class="rg g-sel">
          <div class="rg-items">
            <div class="rows"><button><svg viewBox="0 0 18 20"><path d="M.5 1.500h8v8h-8zM9.500 1.500h8v8h-8zM.5 10.500h8v8h-8zM9.500 10.500h8v8h-8z" fill="#bfe3fa" stroke="#3a9be0"/></svg>Select all</button><button><svg viewBox="0 0 18 20"><path d="M1.500 2.500h6v6h-6zM10.500 2.500h6v6h-6zM1.500 11.500h6v6h-6zM10.500 11.500h6v6h-6z" fill="#fff" stroke="#aaa"/></svg>Select none</button><button><svg viewBox="0 0 18 20"><path d="M1.500 2.500h6v6h-6zM10.500 11.500h6v6h-6z" fill="#fff" stroke="#aaa"/><path d="M9.500 1.500h8v8h-8zM.5 10.500h8v8h-8z" fill="#bfe3fa" stroke="#3a9be0"/></svg>Invert selection</button></div>
          </div>
          <h6>Select</h6>
        </section>
      </div>
      <div class="address">
        <div class="arrows">
          <svg viewBox="0 0 16 16"><path d="M16 8H1M7 2L1 8l6 6" fill="none" stroke="#555" stroke-width="1.500"/></svg>
          <svg viewBox="0 0 16 16"><path d="M0 8h15M9 2l6 6-6 6" fill="none" stroke="#ccc" stroke-width="1.500"/></svg>
          <svg class="tiny" viewBox="0 0 8 8"><path d="M0 2l4 4 4-4" fill="none" stroke="#777" stroke-width="1.500"/></svg>
          <svg viewBox="0 0 16 16"><path d="M8 16V1M2 7l6-6 6 6" fill="none" stroke="#555" stroke-width="1.500"/></svg>
        </div>
        <div class="path"><svg class="i-fold"><use href="#s-fold"/></svg><span class="laq">«</span><a href="#">Personal</a><em></em><a href="#">2021</a><em></em><a href="#">ME433</a><em></em><a href="#">ME433</a><svg class="i-down" viewBox="0 0 12 8"><path d="M1 1l5 5 5-5" fill="none" stroke="#777" stroke-width="1.500"/></svg></div>
        <button class="refresh" aria-label="Refresh"><svg viewBox="0 0 16 16"><path d="M3 3a6.500 6.500 0 1 0 9.500 0M3 0v4h4" fill="none" stroke="#666" stroke-width="1.500"/></svg></button>
        <label class="find"><svg><use href="#s-lens"/></svg><input type="text" placeholder="Search ME433" aria-label="Search ME433"></label>
      </div>
      <div class="ex-body">
        <ul class="tree">
          <li><svg viewBox="0 0 18 18"><path d="M11 2l2 5 5 0-4 4 2 6-5-3-5 3 1-6-4-4 6 0z" fill="#2d9be8"/><path d="M0 5h6M0 9h4M0 14h5" stroke="#2d9be8"/></svg>Quick access</li>
          <li class="sub"><svg viewBox="0 0 18 18"><path d="M.5 3h17v12H.5z" fill="#1e9bf0" stroke="#1279c4"/></svg>Desktop<svg class="pin"><use href="#s-pin"/></svg></li>
          <li class="sub"><svg viewBox="0 0 18 18"><path d="M5 1h8v7h4l-8 9-8-9h4z" fill="#3a8fdc"/></svg>Downloads<svg class="pin"><use href="#s-pin"/></svg></li>
          <li class="sub"><svg viewBox="0 0 18 18"><path d="M2.500.500h10l3 3v14h-13z" fill="#fff" stroke="#777"/><path d="M5 5h8M5 8h8M5 11h8M5 14h8" stroke="#5b9ad0"/></svg>Documents<svg class="pin"><use href="#s-pin"/></svg></li>
          <li class="sub"><svg viewBox="0 0 18 18"><path d="M.5 3.500h17v12H.5z" fill="#fff" stroke="#888"/><path d="M2 5h14v9H2z" fill="#7cc0ee"/><path d="M2 14v-4q6-1 14 2v2z" fill="#2b5f6b"/></svg>Pictures<svg class="pin"><use href="#s-pin"/></svg></li>
          <li class="sub sel"><svg><use href="#s-cfold"/></svg>HW2</li>
          <li class="sub"><svg><use href="#s-cfold"/></svg>Lecture Code</li>
          <li class="sub"><svg><use href="#s-cfold"/></svg>MP1</li>
          <li class="sub"><svg><use href="#s-cfold"/></svg>STAT351</li>
          <li class="top"><svg viewBox="0 0 18 18"><path d="M1 1h12v14l-8 3-4-2z" fill="#f6d36f"/><rect x="6" y="5" width="12" height="11" rx="2" fill="#0061d5"/><path d="M8 11h8" stroke="#fff" stroke-width="2"/></svg>Box</li>
          <li class="top"><svg viewBox="0 0 20 14"><path d="M3 13a4 4 0 0 1 0-8 6 6 0 0 1 11-1 5 5 0 0 1 3 9z" fill="#0f6cbd"/><path d="M8 6q5 0 9 7H3z" fill="#28a8ea"/></svg>OneDrive</li>
          <li class="top"><svg><use href="#s-pcsmall"/></svg>This PC</li>
          <li class="top"><svg><use href="#s-net"/></svg>Network</li>
        </ul>
        <table class="files">
          <thead><tr><th class="c-name">Name<svg class="sort" viewBox="0 0 10 5"><path d="M0 5l5-4 5 4" fill="none" stroke="#777"/></svg></th><th class="c-date">Date modified</th><th class="c-type">Type</th><th class="c-size">Size</th></tr></thead>
          <tbody>
            <tr><td><svg><use href="#s-cfold" opacity=".7"/></svg>.git</td><td>4/23/2021 12:18 PM</td><td>File folder</td><td></td></tr>
            <tr><td><svg><use href="#s-cfold"/></svg>HW2</td><td>4/4/2021 7:28 PM</td><td>File folder</td><td></td></tr>
            <tr><td><svg><use href="#s-cfold"/></svg>HW3</td><td>4/11/2021 3:49 PM</td><td>File folder</td><td></td></tr>
            <tr><td><svg><use href="#s-cfold"/></svg>HW4</td><td>4/16/2021 12:11 PM</td><td>File folder</td><td></td></tr>
            <tr><td><svg><use href="#s-cfold"/></svg>HW5</td><td>4/28/2021 9:53 PM</td><td>File folder</td><td></td></tr>
            <tr class="sel"><td><svg><use href="#s-cfold"/></svg>HW7</td><td>5/1/2021 4:29 PM</td><td>File folder</td><td></td></tr>
            <tr><td><svg viewBox="0 0 18 20"><circle cx="10" cy="9" r="8.500" fill="#3fae74"/><path d="M5 6q5-4 10 3M8 3q5 4 2 10M14 4q-5 3-8 8" fill="none" stroke="#e5f6ec"/><path d="M4 19a3 3 0 0 1 0-5.500 4 4 0 0 1 7 0c3 0 4 5.500 1 5.500z" fill="#fff" stroke="#5b9be0"/></svg>README.md</td><td>4/1/2021 6:42 PM</td><td>MD File</td><td>1 KB</td></tr>
          </tbody>
        </table>
      </div>
      <footer class="ex-foot"><span>7 items</span><span>1 item selected</span>
        <button class="view current" aria-label="Details view"><svg viewBox="0 0 18 18"><path d="M.5 1.500h4v4h-4zM.5 7.500h4v4h-4zM.5 13.500h4v4h-4z" fill="#fff" stroke="#777"/><path d="M7 3.500h11M7 9.500h11M7 15.500h11" stroke="#777" stroke-dasharray="5 1"/></svg></button>
        <button class="view" aria-label="Large icons view"><svg viewBox="0 0 18 14"><path d="M.5.500h17v13H.5z" fill="#fff" stroke="#888"/><path d="M2 2h14v10H2z" fill="#5aa9e0"/><path d="M2 12V8q6-1 14 2v2z" fill="#2b5f6b"/></svg></button>
      </footer>
    </article>
  </div>
  <footer class="taskbar large">
    <button class="task" aria-label="Start"><svg class="i-win"><use href="#s-win"/></svg></button>
    <label class="search"><svg><use href="#s-lens"/></svg><input type="text" placeholder="Type here to search" aria-label="Type here to search"></label>
    <button class="task open" aria-label="File Explorer"><svg class="i-app"><use href="#s-explorer"/></svg></button>
    <button class="task" aria-label="Command Prompt"><svg class="i-app"><use href="#s-cmd"/></svg></button>
    <button class="task open" aria-label="Chrome"><svg class="i-app"><use href="#s-chrome"/></svg></button>
    <button class="task open" aria-label="Sticky Notes"><svg class="i-app"><use href="#s-sticky"/></svg></button>
    <button class="task active" aria-label="nScope"><svg class="i-app"><use href="#s-ntile"/></svg></button>
    <div class="tray">
      <svg viewBox="0 0 20 20"><path d="M2 14l8-8 8 8" fill="none" stroke="#fff" stroke-width="1.500"/></svg>
      <svg viewBox="0 0 20 20"><path d="M6 5.500h12v10H4v-4M19.500 9v3" fill="none" stroke="#fff"/><path d="M6 7.500h10.500v6H6z" fill="#fff"/><path d="M1 2v3M4 2v3M0 5h5v3l-2 2H2L0 8zM2.500 10v4" stroke="#fff" fill="#fff"/></svg>
      <svg viewBox="0 0 20 20"><path d="M5 3.500h14.500v11H2.500M2.500 3v14M10 15v2M7 17.500h7" fill="none" stroke="#fff"/><path d="M.5 2.500h4v4h-4z" fill="#222" stroke="#fff"/></svg>
      <svg viewBox="0 0 20 20"><path d="M.5 7.500h3l4-4v13l-4-4h-3z" fill="none" stroke="#fff"/><path d="M10 8q2 2 0 4" stroke="#fff" fill="none"/><path d="M13 5q4 5 0 10M16 3q5 7 0 14" stroke="#777" fill="none"/></svg>
      <div class="clock"><span>9:36 AM</span><span>5/2/2021</span></div>
      <button class="notes" aria-label="Notifications"><svg viewBox="0 0 22 22"><path d="M0 0h20v17H8l-4 4v-4H0z" fill="#fff"/><path d="M4 5h12M4 9h12M4 13h8" stroke="#222" stroke-width="1.500"/></svg><span>2</span></button>
    </div>
  </footer>
</section>
</div>
<script src="script.js"></script>
</body>
</html>
```
FILE: styles.css
```css
* { box-sizing: border-box; }
body { margin: 0; background: #171717; color: #222; font-family: "Open Sans", "Noto Sans", sans-serif; font-size: 11px; line-height: 14px; }
button, input { font: inherit; color: inherit; margin: 0; padding: 0; }
button { border: 0; background: none; }
a { color: inherit; text-decoration: none; }
svg { display: block; flex: none; }
.sprite { position: absolute; width: 0; height: 0; }
.screens { display: grid; grid-template-columns: 1fr 1fr; min-height: 100vh; }
.screen { display: flex; flex-direction: column; min-width: 0; }

/* nScope window */
.scope-window { flex: 1; display: flex; flex-direction: column; background: #f0f0f0; border-left: 1px solid #777; }
.titlebar { display: flex; align-items: center; height: 24px; background: #fff; padding: 0 2px 0 3px; font-size: 12px; color: #000; }
.app-icon { width: 14px; height: 12px; }
.title { flex: 1; padding-left: 6px; line-height: 18px; }
.wbtn { width: 46px; height: 22px; display: flex; align-items: center; justify-content: center; }
.menubar { display: flex; height: 18px; background: #fff; padding-left: 5px; gap: 10px; font-size: 12px; }
.menubar button { line-height: 18px; }
.scope-body { flex: 1; display: flex; padding: 10px 8px 9px 8px; }
.scope-left { flex: 1; min-width: 0; display: flex; flex-direction: column; gap: 9px; }
.plot { width: 100%; height: auto; background: #282828; border-radius: 1px; }
.plot .grid { stroke: #9a9a9a; stroke-width: 1; fill: none; }
.plot .minor { stroke: #8a8a8a; stroke-width: 1; fill: none; }
.plot .sine { stroke: #d65f50; fill: none; stroke-width: 1; }
.plot .tri { stroke: #2fc98b; fill: none; stroke-width: 1; }
.plot .flag { fill: #33d391; }
.plot text { font-size: 11px; fill: #14573a; }
.outputs { display: grid; grid-template-columns: 279px 205px 263px; gap: 2px; }
.group { margin: 0; padding: 0; border: 1px solid #dedede; min-width: 0; }
.outputs > .group { padding-bottom: 8px; }
.group legend { margin-left: 5px; padding: 0 2px; line-height: 16px; font-size: 12px; }
.muted { color: #9a9a9a; }
.btn { width: 99px; height: 21px; border: 1px solid #adadad; background: #e1e1e1; color: #222; font-size: 12px; line-height: 18px; }
.btn.on { background: #cce4f7; border-color: #2f74b5; }
.btn.focused { outline: 1px dotted #555; outline-offset: -3px; }
.output { display: flex; height: 126px; padding: 5px 0 0 12px; }
.output:last-child { height: 117px; }
hr { margin: 9px 12px 4px 12px; border: 0; border-top: 1px solid #b5b5b5; height: 2px; }
.o-freq { width: 117px; display: flex; flex-direction: column; align-items: flex-start; }
.hs, .vs { appearance: none; outline: none; background: linear-gradient(#e2e5e5, #e2e5e5) center no-repeat; }
.hs { width: 106px; height: 15px; background-size: 100% 4px; }
.vs { writing-mode: vertical-lr; direction: rtl; width: 14px; height: 57px; background-size: 4px 100%; }
.hs::-webkit-slider-thumb { appearance: none; width: 9px; height: 15px; background: #0078d7; clip-path: polygon(0 0, 100% 0, 100% 75%, 50% 100%, 0 75%); }
.vs::-webkit-slider-thumb { appearance: none; width: 14px; height: 9px; background: #0078d7; border-radius: 0 5px 5px 0; }
.hs:disabled::-webkit-slider-thumb, .vs:disabled::-webkit-slider-thumb { background: #c8c8c8; }
.o-freq .hs { margin: 12px 0 7px 6px; }
.hz { padding-left: 16px; }
.cap { margin-top: auto; align-self: stretch; text-align: center; }
.o-amp { width: 64px; display: flex; flex-direction: column; }
.amp-row { display: flex; align-items: flex-end; padding: 5px 0 0 9px; gap: 8px; white-space: nowrap; }
.amp-row span { padding-bottom: 4px; }
.o-mode { display: flex; flex-direction: column; justify-content: space-between; padding-left: 4px; }
.radios { display: flex; flex-direction: column; }
.radios label { display: flex; align-items: center; gap: 2px; height: 16px; white-space: nowrap; }
.radios.wide label { height: 19px; }
input[type="radio"] { appearance: none; flex: none; width: 13px; height: 13px; border: 1px solid #333; border-radius: 50%; background: #fff; }
input[type="radio"]:checked { background: radial-gradient(circle, #222 0 4px, #fff 5px); }
input[type="radio"]:disabled { border-color: #ccc; }
input[type="radio"]:disabled:checked { background: radial-gradient(circle, #c8c8c8 0 4px, #fff 5px); }
.o-duty { display: flex; flex-direction: column; justify-content: space-between; padding: 20px 0 14px 18px; }
.duty-row { display: flex; align-items: center; gap: 8px; }
.stack { display: flex; flex-direction: column; gap: 4px; }
.stack .group { flex: 1; }
.horiz { display: flex; padding: 4px 0 0 12px; }
.horiz .radios { width: 76px; }
.time { width: 154px; display: flex; flex-direction: column; }
.time label { text-align: center; padding: 1px 0 61px; }
.time .hs { width: 154px; margin-bottom: 7px; }
.trigger { display: flex; padding: 5px 0 0 5px; }
.trig-left { width: 135px; }
.trig-left .btn { display: block; margin: 0 0 22px 7px; }
.trig-ch { padding-top: 16px; }

.scope-side { flex: none; width: 309px; display: flex; flex-direction: column; padding-left: 7px; }
.side-grid { display: grid; grid-template-columns: 150px 150px; gap: 4px 2px; }
.run .radios { padding: 5px 0 3px 5px; font-size: 10px; }
.run .radios label { gap: 3px; }
.power-body { display: flex; flex-direction: column; padding: 5px 0 6px 14px; font-size: 10px; }
progress { appearance: none; width: 120px; height: 20px; margin: 6px 0 1px; border: 1px solid #bcbcbc; background: #e6e6e6; }
progress::-webkit-progress-bar { background: #e6e6e6; }
progress::-webkit-progress-value { background: #06b025; }
.channel { font-size: 10px; height: 218px; }
.channel > .btn { display: block; margin: 6px 0 0 12px; }
.ch-body { display: flex; padding: 9px 0 0 12px; }
.sens { width: 78px; }
.sens-row { display: flex; align-items: flex-end; margin-top: 12px; padding-left: 2px; gap: 8px; }
.sens-row .vs { height: 118px; margin-bottom: 12px; }
.frac { display: flex; flex-direction: column; text-align: center; }
.frac span:first-child { border-bottom: 1px solid currentColor; line-height: 13px; }
.range > span { display: block; padding-top: 2px; }
.gauge { display: flex; gap: 2px; margin-top: 1px; }
.gauge svg { width: 20px; height: 138px; stroke: #222; }
.ticks { display: flex; flex-direction: column; justify-content: space-between; height: 134px; }
.ch1 .gauge svg { color: #eb6655; }
.ch2 .gauge svg { color: #33d391; }
.ch3 .gauge svg { color: #abdcf2; stroke: #999; }
.ch4 .gauge svg { color: #faedba; stroke: #999; }
#s-gauge path:first-child { stroke: none; }
.version { align-self: flex-end; padding-top: 2px; font-size: 10px; color: #555; }
.logo { margin-top: auto; align-self: flex-end; display: flex; align-items: flex-end; color: #000; }
.logo svg { width: 44px; height: 38px; }
.logo span { font: 300 27px/32px Inter, sans-serif; margin-left: -5px; }

/* Taskbars */
.taskbar { display: flex; align-items: stretch; background: #202020; color: #fff; }
.taskbar.small { height: 40px; }
.taskbar.large { height: 50px; }
.task { display: flex; align-items: center; justify-content: center; border-bottom: 3px solid transparent; border-top: 3px solid transparent; color: #fff; }
.small .task { width: 48px; margin-right: 1px; border-width: 2px 0; }
.large .task { width: 62px; }
.large .task:first-child { width: 60px; }
.task.open { border-image: linear-gradient(90deg, transparent 9%, #76b9ed 9% 91%, transparent 91%) 0 0 3 0; }
.task.active { background: #4d4d4d; border-bottom-color: #76b9ed; border-top-color: #4d4d4d; }
.small .i-win { width: 17px; height: 16px; }
.small .i-lens { width: 17px; height: 17px; }
.small .i-app { width: 23px; height: 22px; }
.large .i-win { width: 20px; height: 18px; }
.large .i-app { width: 28px; height: 28px; }
.clock { display: flex; flex-direction: column; text-align: center; }
.small .clock { margin-left: auto; padding: 2px 10px 0 0; line-height: 18px; }
.search { display: flex; align-items: center; width: 430px; margin-right: 3px; background: #f2f2f2; border: 1px solid #bbb; padding-left: 15px; gap: 15px; color: #222; }
.search svg { width: 20px; height: 20px; }
.search input { flex: 1; border: 0; background: none; font-size: 17px; }
.search input::placeholder { color: #444; opacity: 1; }
.tray { margin-left: auto; display: flex; align-items: center; padding-right: 7px; gap: 10px; border-right: 1px solid #777; margin-right: 5px; }
.tray > svg { width: 20px; height: 20px; }
.tray .clock { font-size: 14px; line-height: 23px; width: 76px; padding: 0 4px; margin: 0 4px; }
.notes { position: relative; width: 40px; height: 40px; padding: 10px 0 0 4px; }
.notes svg { width: 22px; height: 22px; }
.notes span { position: absolute; left: 13px; top: 19px; width: 20px; height: 20px; border: 1px solid #999; border-radius: 50%; background: #2a2a2a; color: #fff; font-size: 12px; line-height: 18px; text-align: center; }

/* Desktop */
.desktop { flex: 1; position: relative; background: #171717; overflow: hidden; }
.band { position: absolute; top: 494px; left: 1500px; right: 0; height: 139px; background: #5b7a82; border: solid #93c8d6; border-width: 4px 0; }
.icon { position: absolute; width: 95px; color: #fff; font-size: 14px; line-height: 20px; text-align: center; text-shadow: 1px 1px 2px #000; }
.icon svg { width: 60px; height: 60px; margin: 0 auto 4px; }
.icon span { display: block; }
.c1 { left: 0; } .c2 { left: 95px; } .c3 { left: 190px; } .c4 { left: 285px; }
.d1 { left: 1520px; } .d2 { left: 1615px; } .d3 { left: 1710px; } .d4 { left: 1805px; }
.r1 { top: 7px; } .r2 { top: 133px; } .r3 { top: 259px; } .r4 { top: 385px; }
.r5 { top: 511px; } .r6 { top: 637px; } .r7 { top: 763px; } .r8 { top: 889px; }
.games { left: 90px; top: 12px; }
.hasan { left: 382px; top: 132px; }
.dosbox { left: 192px; top: 516px; }
.lockdown { left: 99px; top: 633px; }
.arduino-dark { left: 1204px; top: 894px; }
.pdf-text { font: 600 11px "Open Sans", sans-serif; text-anchor: middle; fill: #333; }
.sw-text { font: 800 26px "Open Sans", sans-serif; fill: #fff; }
.sw-w { font-size: 20px; }
.sw-year { font: 800 11px "Open Sans", sans-serif; fill: #fff; }
.box-text { font: 600 13px "Open Sans", sans-serif; text-anchor: middle; fill: #fff; }
.dos-text { font: 700 18px "Liberation Serif", serif; text-anchor: middle; fill: #f3cf2c; }
.gp-text { font: 700 28px "Liberation Serif", serif; text-anchor: middle; }
.gp-b { fill: #22308f; }
.gp-a { fill: #8a1d22; }

/* File Explorer */
.explorer { position: absolute; left: 450px; top: 122px; width: 1115px; background: #fff; border: 1px solid #4a4a4a; box-shadow: 0 4px 16px #000; color: #111; font-size: 14px; line-height: 20px; }
.ex-title { display: flex; align-items: center; height: 37px; padding-left: 10px; gap: 10px; color: #999; }
.ex-title i { width: 1px; height: 16px; background: #888; }
.ex-name { flex: 1; }
.ex-title .wbtn { width: 58px; margin-left: -10px; }
.i-fold { width: 16px; height: 20px; }
.i-check { width: 16px; height: 20px; }
.i-drop { width: 8px; height: 8px; }
.tabs { display: flex; height: 28px; font-size: 12px; align-items: stretch; border-bottom: 1px solid #dadbdc; color: #333; }
.tab { width: 68px; margin-bottom: -1px; }
.tab.file { width: 70px; background: #0063b1; color: #fff; margin-bottom: 0; }
.tab.current { background: #f5f6f7; border: solid #dadbdc; border-width: 1px 1px 0; }
.i-up { width: 12px; height: 7px; margin: 11px 10px 0 auto; }
.help { width: 20px; height: 20px; margin: 4px 4px 0 0; border-radius: 50%; background: #0a64c8; color: #fff; font-weight: 700; line-height: 20px; }
.ribbon { display: flex; height: 113px; background: #f5f6f7; border-bottom: 1px solid #dadbdc; padding: 3px 0; font-size: 12px; line-height: 17px; color: #333; }
.ribbon button { color: inherit; }
.ribbon button.muted { color: #888; }
.rg { display: flex; flex-direction: column; border-right: 1px solid #e0e1e3; }
.rg-items { display: flex; flex: 1; align-items: flex-start; padding-top: 6px; }
.rg-items > i { width: 1px; height: 56px; margin: 8px 0 0; background: #dcdddf; }
.rg h6 { margin: 0; font: inherit; line-height: 18px; text-align: center; color: #555; }
.g-clip { width: 300px; } .g-org { width: 222px; } .g-new { width: 172px; } .g-open { width: 150px; } .g-sel { width: 130px; }
.big { display: flex; flex-direction: column; align-items: center; gap: 5px; }
.big svg { width: 32px; height: 38px; }
.big .wide-svg { width: 38px; }
.big span { text-align: center; }
.w-pin { width: 80px; margin-left: 4px; } .w-copy { width: 42px; } .w-paste { width: 60px; }
.w-to { width: 52px; } .w-del { width: 58px; } .w-ren { width: 50px; }
.g-org .rg-items { padding-left: 3px; }
.w-new { width: 56px; } .w-prop { width: 66px; margin-left: 3px; }
.dd { display: inline-block; border: 4px solid transparent; border-top-color: #222; border-bottom: 0; margin: 0 0 3px 2px; }
.rows { display: flex; flex-direction: column; }
.rows button { display: flex; align-items: center; height: 26px; gap: 3px; white-space: nowrap; }
.rows svg { width: 18px; height: 20px; }
.rows.loose button { height: 27px; }
.g-new .rows { padding-left: 3px; }
.g-sel .rows { padding-left: 9px; }
.rg-items .rows { margin-top: -4px; }
.address { display: flex; height: 51px; padding: 6px 12px 6px 16px; color: #222; }
.arrows { display: flex; align-items: center; gap: 19px; width: 118px; }
.arrows svg { width: 16px; height: 16px; }
.arrows .tiny { width: 8px; height: 8px; }
.arrows .tiny + svg { margin-left: -3px; }
.path { display: flex; align-items: center; width: 400px; border: 1px solid #d9d9d9; padding: 0 12px 0 4px; }
.laq { padding: 0 10px 2px 11px; }
.path em { width: 6px; height: 6px; border: solid #777; border-width: 1px 1px 0 0; rotate: 45deg; margin: 0 12px 0 8px; }
.i-down { width: 12px; height: 8px; margin-left: auto; }
.refresh { width: 40px; border: 1px solid #d9d9d9; border-left: 0; display: flex; align-items: center; justify-content: center; }
.refresh svg { width: 16px; height: 16px; }
.find { flex: 1; display: flex; align-items: center; gap: 16px; margin-left: 12px; padding-left: 17px; border: 1px solid #d9d9d9; color: #777; }
.find svg { width: 16px; height: 16px; }
.find input { flex: 1; border: 0; background: none; }
.find input::placeholder { color: #6d6d6d; opacity: 1; }
.ex-body { display: flex; min-height: 453px; }
.tree { flex: none; list-style: none; width: 198px; margin: 0; padding: 22px 2px 0 0; border-right: 1px solid #f0f0f0; }
.tree li { display: flex; align-items: center; height: 30px; padding-left: 31px; gap: 6px; }
.tree svg { width: 19px; height: 18px; }
.tree .sub { padding-left: 40px; gap: 7px; }
.tree .top { margin-top: 10px; }
.tree .sel, .files .sel { background: #d9d9d9; }
.tree .pin { width: 13px; height: 13px; margin: 0 4px 0 auto; }
.files { width: 765px; margin-left: 20px; border-collapse: separate; border-spacing: 0; table-layout: fixed; align-self: flex-start; color: #6d6d6d; }
.files th { position: relative; height: 33px; padding: 0 0 0 8px; font-weight: 400; text-align: left; color: #4c607a; border-right: 1px solid #e5e5e5; }
.files .c-name { width: 231px; padding-left: 3px; } .c-date { width: 225px; } .c-type { width: 188px; }
.sort { position: absolute; left: 108px; top: 2px; width: 10px; height: 5px; }
.files tbody::before { content: ""; display: block; height: 9px; }
.files td { height: 27px; padding: 0 5px 0 9px; }
.files td:first-child { display: flex; align-items: center; gap: 8px; padding-left: 5px; color: #111; }
.files td:last-child { text-align: right; }
.files td svg { width: 18px; height: 20px; }
.ex-foot { display: flex; align-items: center; height: 29px; padding: 0 8px 0 17px; color: #2c4a70; }
.ex-foot span { padding-right: 12px; margin-right: 13px; border-right: 1px solid #e8e8e8; }
.view { width: 28px; height: 29px; display: flex; align-items: center; justify-content: center; margin-left: 1px; }
.view.current { margin-left: auto; background: #cce8f6; border: 1px solid #26a0da; }
.view svg { width: 18px; height: 16px; }
```
FILE: script.js
```js
// Draws the oscilloscope grid and the two channel traces.
(function () {
  const left = 41, right = 1554, top = 6, bottom = 681, cols = 12, rows = 8, sub = 5;
  const dx = (right - left) / cols, dy = (bottom - top) / rows;
  const midX = left + dx * 6, midY = top + dy * 4;
  const snap = v => Math.round(v) + 0.5;
  let grid = '', minor = '';
  for (let i = 0; i <= cols; i++) grid += `M${snap(left + i * dx)} ${top}V${bottom}`;
  for (let i = 0; i <= rows; i++) minor += `M${left} ${snap(top + i * dy)}H${right}`;
  for (let i = 0; i <= cols * sub; i++) {
    const x = snap(left + i * dx / sub);
    grid += `M${x} ${top}v5M${x} ${midY - 4}v9M${x} ${bottom}v-5`;
  }
  for (let i = 0; i <= rows * sub; i++) {
    const y = snap(top + i * dy / sub);
    grid += `M${left} ${y}h4M${midX - 4} ${y}h9M${right} ${y}h-5`;
  }

  const end = 1493.500, period = 69.410, peak = 94;
  let tri = 'M41 263', sine = '';
  const triTop = 202, triBottom = 336;
  for (let k = -0.5; peak + k * period < end; k += 0.5) {
    tri += `L${(peak + k * period).toFixed(1)} ${k % 1 ? triBottom : triTop}`;
  }
  tri += `L${end} 244`;
  for (let x = left; x <= end; x += 1) {
    const y = 275 - 69 * Math.cos(2 * Math.PI * (x - 68.400) / (period / 2));
    sine += (sine ? 'L' : 'M') + x + ' ' + y.toFixed(1);
  }
  document.getElementById('plot').innerHTML =
    `<path class="minor" d="${minor}"/><path class="grid" d="${grid}"/>` +
    `<path class="tri" d="M${left} ${snap(midY)}H${right}"/>` +
    `<path class="sine" d="${sine}"/><path class="tri" d="${tri}"/>` +
    `<path class="tri" d="M1467 258v13"/>` +
    `<path class="flag" d="M3 335h32l5 8-5 8H3z"/><text x="8" y="347">Ch2</text>`;
})();
```
